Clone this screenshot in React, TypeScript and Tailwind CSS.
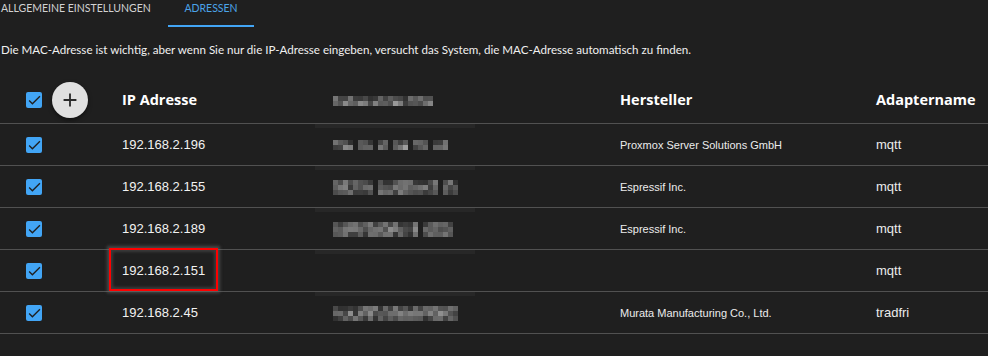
import React from "react";

type Row = {
  ip: string;
  vendor: string;
  adapter: string;
  seed: number;
  groups: [number, number][];
  lines: number;
  boxed?: boolean;
};

const ROWS: Row[] = [
  { ip: "192.168.2.196", vendor: "Proxmox Server Solutions GmbH", adapter: "mqtt", seed: 7, groups: [[0, 4], [5, 3], [9, 2], [12, 3], [16, 3], [20, 3]], lines: 2 },
  { ip: "192.168.2.155", vendor: "Espressif Inc.", adapter: "mqtt", seed: 19, groups: [[0, 8], [9, 12], [22, 3]], lines: 3 },
  { ip: "192.168.2.189", vendor: "Espressif Inc.", adapter: "mqtt", seed: 31, groups: [[0, 17], [18, 3], [21, 3]], lines: 3 },
  { ip: "192.168.2.151", vendor: "", adapter: "mqtt", seed: 0, groups: [], lines: 0, boxed: true },
  { ip: "192.168.2.45", vendor: "Murata Manufacturing Co., Ltd.", adapter: "tradfri", seed: 43, groups: [[0, 13], [13, 12]], lines: 3 },
];

function rng(seed: number) {
  let s = seed * 7919 + 13;
  return () => {
    s = (s * 9301 + 49297) % 233280;
    return s / 233280;
  };
}

// pixelated (redacted) MAC address
function Mosaic({ seed, groups, lines }: { seed: number; groups: [number, number][]; lines: number }) {
  const r = rng(seed);
  const cols = groups.reduce((m, [a, l]) => Math.max(m, a + l), 0);
  const rects: React.ReactNode[] = [];
  for (let y = 0; y < lines; y++) {
    for (const [a, l] of groups) {
      for (let x = a; x < a + l; x++) {
        const v = Math.round(48 + r() * 75 + (y === 1 ? r() * 40 : 0));
        rects.push(<rect key={`${x}-${y}`} x={x * 5} y={y * 5} width={5} height={5} fill={`rgb(${v},${v},${v})`} />);
      }
    }
  }
  return (
    <svg width={cols * 5} height={lines * 5} className="block">
      {rects}
    </svg>
  );
}

function Check() {
  return (
    <span className="flex h-4 w-4 items-center justify-center rounded-[2px] bg-[#42a5f5]">
      <svg viewBox="0 0 24 24" className="h-4 w-4" fill="#1f1f1f">
        <path d="M9.6 16.2 5.4 12l-1.4 1.4 5.6 5.6 12-12-1.4-1.4z" />
      </svg>
    </span>
  );
}

const grid = "grid grid-cols-[106px_209px_289px_256px_1fr]";

export default function App() {
  return (
    <div className="h-[356px] w-[988px] overflow-hidden bg-[#1f1f1f] text-white">
      <div className="flex h-[28px] font-['Lato',sans-serif] text-[10.5px] uppercase">
        <div className="w-[168px] pt-[1px] pl-[1px] text-[#d2d2d2]">Allgemeine Einstellungen</div>
        <div className="flex w-[86px] flex-col items-center justify-between">
          <span className="pt-[1px] text-[#4ba3e8]">Adressen</span>
          <span className="mb-[1px] h-[2px] w-full bg-[#42a5f5]" />
        </div>
      </div>

      <p className="mt-[14px] pl-[1px] font-['Lato',sans-serif] text-[11.6px] leading-[16px] text-[#f0f0f0]">
        Die MAC-Adresse ist wichtig, aber wenn Sie nur die IP-Adresse eingeben, versucht das System, die MAC-Adresse automatisch zu finden.
      </p>

      <div className="mt-[18px]">
        <div className={`${grid} h-[48px] items-center border-b border-[#515151] font-['Open_Sans',sans-serif] text-[14.5px] font-bold`}>
          <div className="flex items-center pl-[26px]">
            <Check />
            <span className="ml-[10px] flex h-9 w-9 items-center justify-center rounded-full bg-[#e0e0e0] shadow-[0_2px_4px_rgba(0,0,0,0.5)]">
              <svg viewBox="0 0 24 24" className="h-[22px] w-[22px]" fill="#2a2a2a">
                <path d="M19 13h-6v6h-2v-6H5v-2h6V5h2v6h6z" />
              </svg>
            </span>
          </div>
          <div className="pl-4">IP Adresse</div>
          <div className="pl-[18px] pt-[2px]">
            <Mosaic seed={3} groups={[[0, 20]]} lines={2} />
          </div>
          <div className="pl-4">Hersteller</div>
          <div className="pl-4">Adaptername</div>
        </div>

        {ROWS.map((row) => (
          <div key={row.ip} className={`${grid} h-[42px] items-center border-b border-[#515151]`}>
            <div className="pl-[26px]">
              <Check />
            </div>
            <div className="relative h-full pl-4 font-['Liberation_Sans',sans-serif] text-[13px] leading-[42px] text-[#f2f2f2]">
              {row.ip}
              {row.boxed && (
                <span className="absolute left-[3px] top-[-2px] h-[43px] w-[109px] border-2 border-[#ff0000] shadow-[0_0_3px_2px_rgba(110,110,110,0.55),inset_0_0_3px_2px_rgba(90,90,90,0.5)]" />
              )}
            </div>
            <div className="h-full">
              <div className="flex h-full w-[160px] items-center pl-[18px] shadow-[inset_0_4px_0_#272727]">
                {row.lines > 0 && <Mosaic seed={row.seed} groups={row.groups} lines={row.lines} />}
              </div>
            </div>
            <div className="pl-4 font-['Liberation_Sans',sans-serif] text-[11px] text-[#ececec]">{row.vendor}</div>
            <div className="pl-4 font-['Liberation_Sans',sans-serif] text-[13px] text-[#ececec]">{row.adapter}</div>
          </div>
        ))}
      </div>
    </div>
  );
}
